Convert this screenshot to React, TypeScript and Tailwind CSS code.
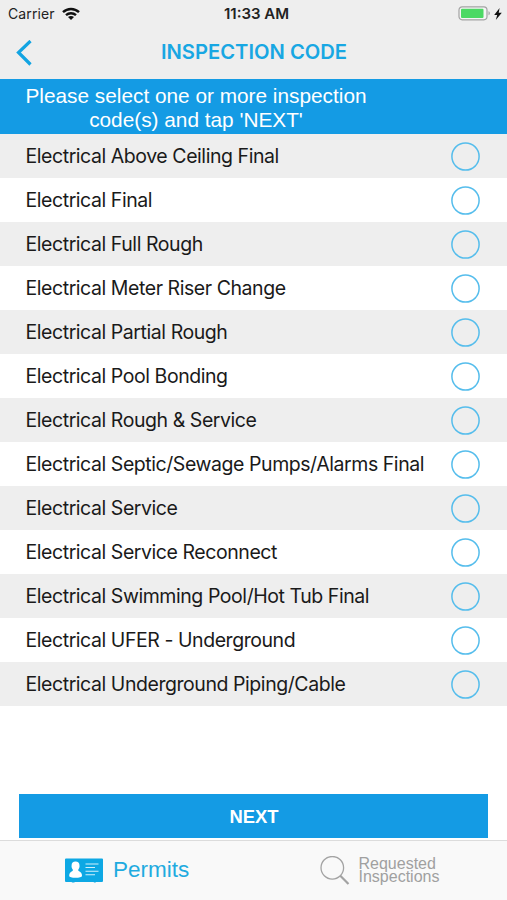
const codes = [
  "Electrical Above Ceiling Final",
  "Electrical Final",
  "Electrical Full Rough",
  "Electrical Meter Riser Change",
  "Electrical Partial Rough",
  "Electrical Pool Bonding",
  "Electrical Rough & Service",
  "Electrical Septic/Sewage Pumps/Alarms Final",
  "Electrical Service",
  "Electrical Service Reconnect",
  "Electrical Swimming Pool/Hot Tub Final",
  "Electrical UFER - Underground",
  "Electrical Underground Piping/Cable",
];

function StatusBar() {
  return (
    <div className="grid h-[27px] grid-cols-[1fr_auto_1fr] items-center pl-2 pr-[5px] text-[14px] text-[#222]">
      <div className="flex items-center gap-[7px]">
        <span className="tracking-[0.1px]">Carrier</span>
        <svg width="18" height="14" viewBox="0 0 18 14" fill="none" stroke="#111" strokeWidth="2.4">
          <path d="M1 5.2C5.5 0.9 12.5 0.9 17 5.2" />
          <path d="M4 8.2C6.8 5.6 11.2 5.6 14 8.2" />
          <path d="M9 13L6 10C7.8 8.5 10.2 8.5 12 10Z" fill="#111" stroke="none" />
        </svg>
      </div>
      <span className="pl-[3px] pt-[2px] text-[15px] font-semibold">11:33 AM</span>
      <div className="flex items-center justify-end gap-[3px]">
        <svg width="33" height="15" viewBox="0 0 33 15">
          <rect x="1" y="0.8" width="28" height="13" rx="3.2" fill="#f5f5f5" stroke="#a3a3a3" strokeWidth="1.2" />
          <rect x="3" y="2.7" width="22.5" height="9.2" rx="1" fill="#4cd964" />
          <path d="M30.5 5.3C32.3 5.8 32.3 8.8 30.5 9.3Z" fill="#a3a3a3" />
        </svg>
        <svg width="8" height="12" viewBox="0 0 8 12">
          <path d="M5.6 0L0.2 7H3.2L1.8 12L7.8 4.8H4.7Z" fill="#111" />
        </svg>
      </div>
    </div>
  );
}

export default function App() {
  return (
    <div className="flex h-[900px] w-[507px] flex-col overflow-hidden bg-white font-['Inter',sans-serif]">
      {/* Header */}
      <header className="h-[79px] bg-[#eee]">
        <StatusBar />
        <div className="grid h-[51px] grid-cols-[40px_1fr_40px] items-center">
          <button type="button" className="pl-4">
            <svg width="17" height="26" viewBox="0 0 17 26" fill="none" stroke="#12a4e2" strokeWidth="3.2">
              <path d="M14.5 1L2.5 12.5L14.5 24.5" />
            </svg>
          </button>
          <h1 className="pl-px text-center text-[20.2px] font-semibold text-[#18a7e3]">INSPECTION CODE</h1>
        </div>
      </header>

      {/* Instructions */}
      <div className="h-[55px] bg-[#149be4] pl-[25px] pt-[5px] text-white">
        <p className="w-[342px] text-center font-['Liberation_Sans',sans-serif] text-[20.8px] leading-[23.5px]">
          Please select one or more inspection
          <br />
          code(s) and tap 'NEXT'
        </p>
      </div>

      {/* Inspection codes */}
      <ul>
        {codes.map((code) => (
          <li
            key={code}
            className="flex h-11 items-center justify-between pl-[25.5px] pr-[27px] text-[19.5px] tracking-[-0.44px] text-[#1a1a1a] odd:bg-[#eee]"
          >
            <span className="pt-[2px]">{code}</span>
            <svg width="29" height="29" viewBox="0 0 29 29" fill="none" stroke="#55bdec">
              <circle cx="14.5" cy="14.5" r="13.6" strokeWidth="1.5" />
            </svg>
          </li>
        ))}
      </ul>

      <button
        type="button"
        className="mx-[19px] mt-[88px] h-[44px] bg-[#149be4] pl-px pt-px font-['Liberation_Sans',sans-serif] text-[18.4px] font-bold text-white"
      >
        NEXT
      </button>

      {/* Tab bar */}
      <nav className="mt-[2px] grid h-[60px] grid-cols-2 border-t border-[#dcdcdc] bg-[#f9f9f9] font-['Liberation_Sans',sans-serif]">
        <a className="flex items-center pl-[65px] text-[22.5px] text-[#1fabe0]">
          <svg width="38" height="25" viewBox="0 0 38 25" className="mr-[10px]">
            <path d="M1 0.5H37Q38 0.5 38 1.5V23Q38 24 37 24H31Q30 25 28.5 24H10Q8 25 6.5 24H1Q0 24 0 23V1.5Q0 0.5 1 0.5Z" fill="#0da8e4" />
            <path d="M10.5 3.5C13 3.5 14.6 5.1 14.5 7.5C14.8 9.4 14 10.5 13.3 11.4V12.8C15.8 14 17 15 17 17.8C17 19.2 14 19.8 10.5 19.8C7 19.8 4.2 19.2 4.2 17.8C4.2 15 5.4 14 7.8 12.8V11.4C7 10.5 6.3 9.4 6.6 7.5C6.5 5.1 8.1 3.5 10.5 3.5Z" fill="#fff" />
            <path d="M20.5 6H33.5M20.5 9.5H30M20.5 13.2H33.5M20.5 16.8H30" stroke="#d2f0fb" strokeWidth="1.1" />
          </svg>
          <span className="pb-[2px]">Permits</span>
        </a>
        <a className="flex items-center pl-[66px] text-[16px] leading-[13px] text-[#a0a0a0]">
          <svg width="30" height="30" viewBox="0 0 30 30" fill="none" stroke="#a3a3a3" className="mr-[9px]">
            <circle cx="12.3" cy="11.8" r="11.3" strokeWidth="1.3" />
            <path d="M20.3 19.8L28.5 28" strokeWidth="2.2" />
          </svg>
          <span className="pb-[2px]">
            Requested
            <br />
            Inspections
          </span>
        </a>
      </nav>
    </div>
  );
}
